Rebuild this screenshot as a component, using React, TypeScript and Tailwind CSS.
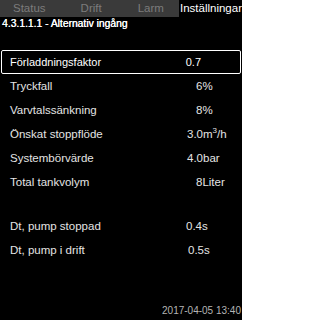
const font = { fontFamily: '"Liberation Sans", Arial, sans-serif' };

interface Row {
  label: string;
  value: React.ReactNode;
  valueLeft: string;
}

const rows: Row[] = [
  { label: "Tryckfall", value: "6%", valueLeft: "pl-[196px]" },
  { label: "Varvtalssänkning", value: "8%", valueLeft: "pl-[196px]" },
  {
    label: "Önskat stoppflöde",
    value: (
      <>
        3.0m<sup className="text-[8px]">3</sup>/h
      </>
    ),
    valueLeft: "pl-[187px]",
  },
  { label: "Systembörvärde", value: "4.0bar", valueLeft: "pl-[187px]" },
  { label: "Total tankvolym", value: "8Liter", valueLeft: "pl-[196px]" },
];

function ValueRow({ label, value, valueLeft }: Row) {
  return (
    <div className="relative flex h-[24px] items-center text-[11.5px] text-[#e4e4e4]">
      <span className="pl-[10px]">{label}</span>
      <span className={`absolute left-0 top-0 flex h-full items-center ${valueLeft}`}>{value}</span>
    </div>
  );
}

export default function App() {
  return (
    <div className="flex h-[320px] w-[242px] flex-col overflow-hidden bg-black" style={font}>
      {/* Tabs */}
      <div className="flex h-[17px] text-[11.5px] leading-[17px]">
        <div className="flex w-[180px] bg-[#3a3a3a] text-[#7c7c7c]">
          <span className="pl-[13px]">Status</span>
          <span className="pl-[35px]">Drift</span>
          <span className="pl-[36px]">Larm</span>
        </div>
        <div className="flex-1 pl-[1px] text-white">Inställningar</div>
      </div>

      {/* Breadcrumb */}
      <div className="pl-[2px] pt-[1px] text-[10.3px] leading-[12px] text-white [text-shadow:0.3px_0_0_#fff]">
        4.3.1.1.1 - Alternativ ingång
      </div>

      {/* Selected row */}
      <div className="mx-[1px] mt-[20px] flex h-[24px] items-center rounded-[2px] border border-white text-[11px] text-white">
        <span className="pl-[8px]">Förladdningsfaktor</span>
        <span className="ml-auto pr-[39px]">0.7</span>
      </div>

      <div className="mt-[1px] flex flex-col">
        {rows.map((r) => (
          <ValueRow key={r.label} {...r} />
        ))}
      </div>

      <div className="mt-[20px] flex flex-col">
        <ValueRow label="Dt, pump stoppad" value="0.4s" valueLeft="pl-[186px]" />
        <ValueRow label="Dt, pump i drift" value="0.5s" valueLeft="pl-[188px]" />
      </div>

      <div className="mt-auto pb-[2px] pr-[1px] text-right text-[10px] text-[#b4b4b4]">
        2017-04-05 13:40
      </div>
    </div>
  );
}
